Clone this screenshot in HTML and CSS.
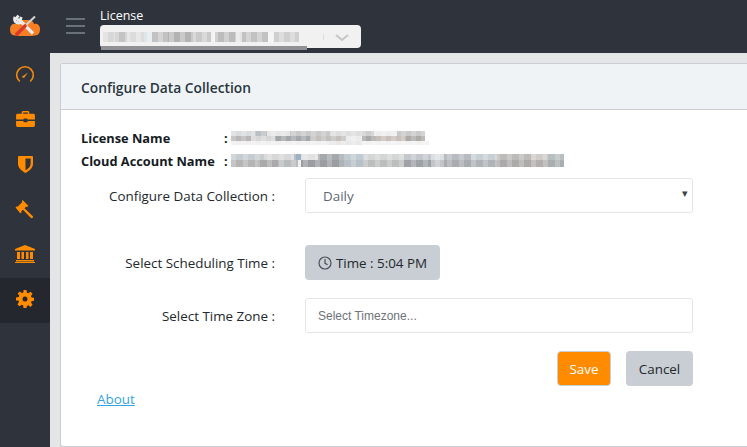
FILE: index.html
```html
<!DOCTYPE html>
<html lang="en">
<head>
    <meta charset="UTF-8" />
    <title>Configure Data Collection</title>
    <link rel="stylesheet" href="styles.css">
</head>
<body>
    <header class="topbar">
        <div class="brand">
            <svg width="30" height="24" viewBox="0 0 30 24">
                <path fill="#f47f24" d="M5 21.500C1 21.500 0 18 0 15c0-4 3-6 6-5 1-3 3-4 6-4h6c3 0 5 1 6 4 3-1 6 1 6 5 0 3-1 6.500-5 6.500-2 .5-5 .5-10 .5s-8 0-10-.5z"/>
                <path stroke="#ececec" stroke-width="3.200" d="M10 6.500l13 13"/>
                <path fill="none" stroke="#ececec" stroke-width="2.800" d="M8.500 1.500L6.500 4l1.500 2 2.500-.5.800-2.500M5 3a4 4 0 0 0 1.500 5.500c2 1 4 .5 5-1"/>
                <path stroke="#d4d4d4" stroke-width="2" d="M25 2.500l-10 9.500"/>
                <path stroke="#d8392b" stroke-width="3.600" stroke-linecap="round" d="M15 12l-8 8"/>
            </svg>
        </div>
        <div class="burger"><span></span><span></span><span></span></div>
        <div class="license-picker">
            <div class="license-label">License</div>
            <div class="license-select">
                <div class="mosaic-top"></div>
                <div class="select-sep"></div>
                <svg width="14" height="8" viewBox="0 0 14 8"><path d="M1 1l6 5 6-5" fill="none" stroke="#c4c6c8" stroke-width="2"/></svg>
            </div>
        </div>
    </header>
    <div class="app-body">
        <nav class="sidebar">
            <div class="nav-item">
                <svg width="20" height="20" viewBox="0 0 20 20"><path d="M4.800 17.500a8.300 8.300 0 1 1 10.400 0" fill="none" stroke="#f58a0b" stroke-width="1.600"/><path d="M6.500 13l6.500-4.500-4 5.500z" fill="#f58a0b"/></svg>
            </div>
            <div class="nav-item">
                <svg width="19" height="16" viewBox="0 0 20 17"><path fill="#ff8c00" d="M6 3V1.500C6 .7 6.700 0 7.500 0h5c.8 0 1.500.7 1.500 1.500V3h4.500c.8 0 1.500.7 1.500 1.500V9h-8V8H8v1H0V4.500C0 3.700.7 3 1.500 3H6zm1.500 0h5V1.500h-5V3zM0 10.500h8V12h4v-1.500h8v5c0 .8-.7 1.500-1.500 1.500h-17C.7 17 0 16.300 0 15.500v-5z"/></svg>
            </div>
            <div class="nav-item">
                <svg width="15" height="17" viewBox="0 0 16 18"><path fill="#ff8c00" fill-rule="evenodd" d="M1 0h14c.6 0 1 .4 1 1v7c0 5-4 8-8 10-4-2-8-5-8-10V1c0-.6.4-1 1-1zm7 2.500V15c3-1.500 5.500-3.500 5.500-7V2.500H8z"/></svg>
            </div>
            <div class="nav-item">
                <svg width="20" height="19" viewBox="0 0 20 20"><path fill="#ff8c00" d="M7.500 0l6 6-1.500 1.500-.7-.7-1.800 1.800 8.500 8.200c.6.600.6 1.500 0 2-.5.600-1.400.600-2 0l-8.200-8.500-1.800 1.800.7.700L5 14 0 8l1.500-1.500.7.700 5-5-.7-.7z"/></svg>
            </div>
            <div class="nav-item">
                <svg width="20" height="18" viewBox="0 0 20 18"><path fill="#ff8c00" d="M10 0l10 4v1.500H0V4zM2 7h3v7H2zm4.500 0h2.500v7H6.500zm4.500 0h2.500v7H11zm4 0h3v7h-3zM1 15h18v1.500H1zM0 17h20v1H0z"/></svg>
            </div>
            <div class="nav-item nav-active">
                <svg width="18" height="18" viewBox="-1 -1 18 18"><path fill="#ff8c00" fill-rule="evenodd" d="M6.500-1h3l.4 2.700 1.400.6 2.200-1.600 2.100 2.100-1.600 2.200.6 1.400 2.700.4v3l-2.700.4-.6 1.400 1.600 2.200-2.100 2.100-2.200-1.600-1.400.6L9.500 17h-3l-.4-2.700-1.400-.6-2.200 1.600-2.100-2.100 1.600-2.200-.6-1.400L-1 9.500v-3l2.700-.4.6-1.400L.7 2.500l2.100-2.100L5 2l1.400-.6zM8 5.500a2.500 2.500 0 1 0 0 5 2.500 2.500 0 0 0 0-5z"/></svg>
            </div>
        </nav>
        <main class="content">
            <section class="card">
                <div class="card-header">Configure Data Collection</div>
                <div class="card-body">
                    <div class="info-row">
                        <span class="info-label">License Name</span>
                        <span class="info-colon">:</span>
                        <div class="mosaic-name"></div>
                    </div>
                    <div class="info-row">
                        <span class="info-label">Cloud Account Name</span>
                        <span class="info-colon">:</span>
                        <div class="mosaic-account"></div>
                    </div>
                    <div class="form-row row-frequency">
                        <label class="form-label">Configure Data Collection :</label>
                        <div class="form-control select-control">Daily<span class="caret">▾</span></div>
                    </div>
                    <div class="form-row row-time">
                        <label class="form-label">Select Scheduling Time :</label>
                        <button class="btn btn-time">
                            <svg width="14" height="14" viewBox="0 0 14 14"><circle cx="7" cy="7" r="6" fill="none" stroke="#4a5058" stroke-width="1.200"/><path d="M7 3v4.300l2.600 1.500" fill="none" stroke="#4a5058" stroke-width="1.200"/></svg>
                            Time : 5:04 PM
                        </button>
                    </div>
                    <div class="form-row row-zone">
                        <label class="form-label">Select Time Zone :</label>
                        <div class="form-control zone-control">Select Timezone...</div>
                    </div>
                    <div class="actions">
                        <button class="btn btn-save">Save</button>
                        <button class="btn btn-cancel">Cancel</button>
                    </div>
                    <a class="about" href="#">About</a>
                </div>
            </section>
        </main>
    </div>
</body>
</html>
```

FILE: styles.css
```css
* {
    box-sizing: border-box;
}
body {
    margin: 0;
    height: 447px;
    overflow: hidden;
    font-family: "Open Sans", sans-serif;
    font-size: 13.400px;
    color: #29363d;
    background-color: #e4e5e6;
}
.topbar {
    height: 53px;
    background-color: #2f333b;
    display: flex;
}
.brand {
    width: 50px;
    padding: 14px 0 0 10px;
}
.burger {
    width: 50px;
    padding: 18px 0 0 16px;
    display: flex;
    flex-direction: column;
    gap: 5px;
}
.burger span {
    display: block;
    width: 19px;
    height: 2px;
    background-color: #69727b;
}
.license-label {
    color: #fff;
    font-size: 12.500px;
    line-height: 17px;
    padding-top: 7px;
}
.license-select {
    width: 261px;
    height: 23px;
    margin-top: 1px;
    background-color: #f1f1f1;
    border-radius: 4px;
    position: relative;
}
.select-sep {
    position: absolute;
    left: 223px;
    top: 9px;
    width: 1px;
    height: 6px;
    background-color: #ddd;
}
.license-select svg {
    position: absolute;
    left: 235px;
    top: 9px;
}
/* redacted values, drawn as the pixel blocks of the screenshot */
.mosaic-top {
    width: 207px;
    height: 25px;
    background:
        linear-gradient(#8f9194, #8f9194) 1px 21px / 206px 4px no-repeat,
        repeating-linear-gradient(90deg, rgba(255,255,255,.3) 0 5px, rgba(255,255,255,0) 5px 11px) 3px 7px / 196px 10px no-repeat,
        linear-gradient(90deg, #d8d8d8 0 6%, #c4c4c4 6% 12%, #dcdcdc 12% 21%, #dfe6ea 21% 25%, #c2c2c2 25% 33%, #b3b3b3 33% 46%, #c9c9c9 46% 55%, #f1f1f1 55% 57%, #bcbcbc 57% 68%, #e4e4e4 68% 71%, #c2c2c2 71% 84%, #f1f1f1 84% 87%, #cfcfcf 87% 100%) 3px 7px / 196px 10px no-repeat;
    filter: blur(.4px);
}
.nav-item {
    height: 45px;
    padding-bottom: 3px;
    display: flex;
    align-items: center;
    justify-content: center;
}
.app-body {
    display: flex;
    height: 394px;
}
.sidebar {
    width: 50px;
    background-color: #2f333b;
}
.nav-active {
    background-color: #24272d;
}
.content {
    flex: 1;
    padding: 10px 0 0 10px;
}
.card {
    height: 384px;
    background-color: #fff;
    border: 1px solid #c8ced3;
    border-right: 0;
    border-radius: 3px 0 0 3px;
}
.card-header {
    height: 46px;
    background-color: #f0f3f5;
    border-bottom: 1px solid #c8ced3;
    padding: 14px 20px;
    font-size: 13.800px;
    font-weight: 600;
}
.card-body {
    padding: 16px 0 0 20px;
}
.info-row {
    height: 23px;
    display: flex;
    align-items: center;
    font-weight: 700;
    color: #151b1e;
    font-size: 12.800px;
}
.info-label {
    width: 143px;
}
.info-colon {
    width: 7px;
}
.mosaic-name {
    width: 198px;
    height: 14px;
    background:
        repeating-linear-gradient(90deg, rgba(255,255,255,.2) 0 5px, rgba(255,255,255,0) 5px 10px),
        linear-gradient(90deg, #b9b6b6 0 10%, #d6d6d6 10% 22%, #a5a8ab 22% 40%, #c3c0be 40% 58%, #ececec 58% 66%, #a9a9a9 66% 73%, #c9bfbb 73% 88%, #adaaa7 88% 98%, #fff 98%) 0 5px / 100% 5px no-repeat,
        linear-gradient(90deg, #d9dcde 0 12%, #bcc0c3 12% 18%, #e6e6e6 18% 30%, #c9c9c9 30% 50%, #dedede 50% 66%, #cecece 66% 72%, #eeeeee 72% 84%, #c9c9c9 84% 98%, #fff 98%) 0 0 / 100% 5px no-repeat,
        linear-gradient(90deg, #f0f0f0 0 50%, #e8e8e8 50% 66%, #f2f2f2 66% 100%) 0 10px / 100% 4px no-repeat;
}
.mosaic-account {
    width: 333px;
    height: 13px;
    background:
        repeating-linear-gradient(90deg, rgba(255,255,255,.22) 0 5px, rgba(255,255,255,0) 5px 12px),
        linear-gradient(90deg, #b5b5b5 0 8%, #aaa 8% 14%, #b9bcbc 14% 20%, #f0f0f0 20% 21%, #9a9ea2 21% 34%, #b6c0c6 34% 40%, #bcbebe 40% 52%, #9da2a6 52% 60%, #c3c6c8 60% 64%, #a8acb0 64% 72%, #aeb4b8 72% 80%, #adabaa 80% 90%, #b2afac 90% 95%, #a9aeb0 95%) 0 6px / 100% 7px no-repeat,
        linear-gradient(90deg, #c6ccd0 0 10%, #d8d8d8 10% 19%, #9fb0c0 19% 21%, #e2e2e2 21% 26%, #a5a9ac 26% 34%, #c0ccd2 34% 40%, #d4d6d6 40% 52%, #c4c8cc 52% 60%, #dcdfe1 60% 64%, #b8bcc0 64% 72%, #c8d0d4 72% 80%, #bdbbba 80% 90%, #cfccc9 90% 95%, #b9bec0 95%) 0 0 / 100% 6px no-repeat;
}
.form-row {
    display: flex;
    align-items: center;
    padding-right: 54px;
}
.form-label {
    width: 194px;
    padding-top: 1px;
    text-align: right;
    margin-right: 30px;
    color: #23282c;
}
.form-control {
    width: 388px;
    background-color: #fff;
    border: 1px solid #e4e7ea;
    border-radius: 3px;
}
.row-frequency {
    margin-top: 6px;
}
.select-control {
    height: 35px;
    line-height: 35px;
    padding-left: 17px;
    color: #5c6873;
    position: relative;
}
.caret {
    position: absolute;
    right: 4px;
    top: -3px;
    font-size: 11px;
    line-height: 33px;
    color: #444;
}
.row-time {
    margin-top: 32px;
}
.btn {
    border-radius: 4px;
    border: 1px solid transparent;
    font-family: inherit;
    font-size: 13.400px;
    color: #23282c;
}
.btn-time {
    width: 135px;
    height: 35px;
    background-color: #c8ced3;
    display: flex;
    align-items: center;
    justify-content: center;
    gap: 4px;
}
.row-zone {
    margin-top: 18px;
}
.zone-control {
    height: 35px;
    line-height: 34px;
    padding-left: 12px;
    font-family: "Liberation Sans", sans-serif;
    font-size: 12px;
    color: #6f7479;
}
.actions {
    width: 612px;
    margin-top: 18px;
    display: flex;
    justify-content: flex-end;
    gap: 15px;
}
.btn-save {
    width: 54px;
    height: 35px;
    background-color: #ff8c00;
    border-color: #c8ced3;
    color: #fff;
}
.btn-cancel {
    width: 67px;
    height: 35px;
    background-color: #c8ced3;
}
.about {
    display: block;
    width: fit-content;
    margin: 4px 0 0 16px;
    color: #35a5dd;
}
```
